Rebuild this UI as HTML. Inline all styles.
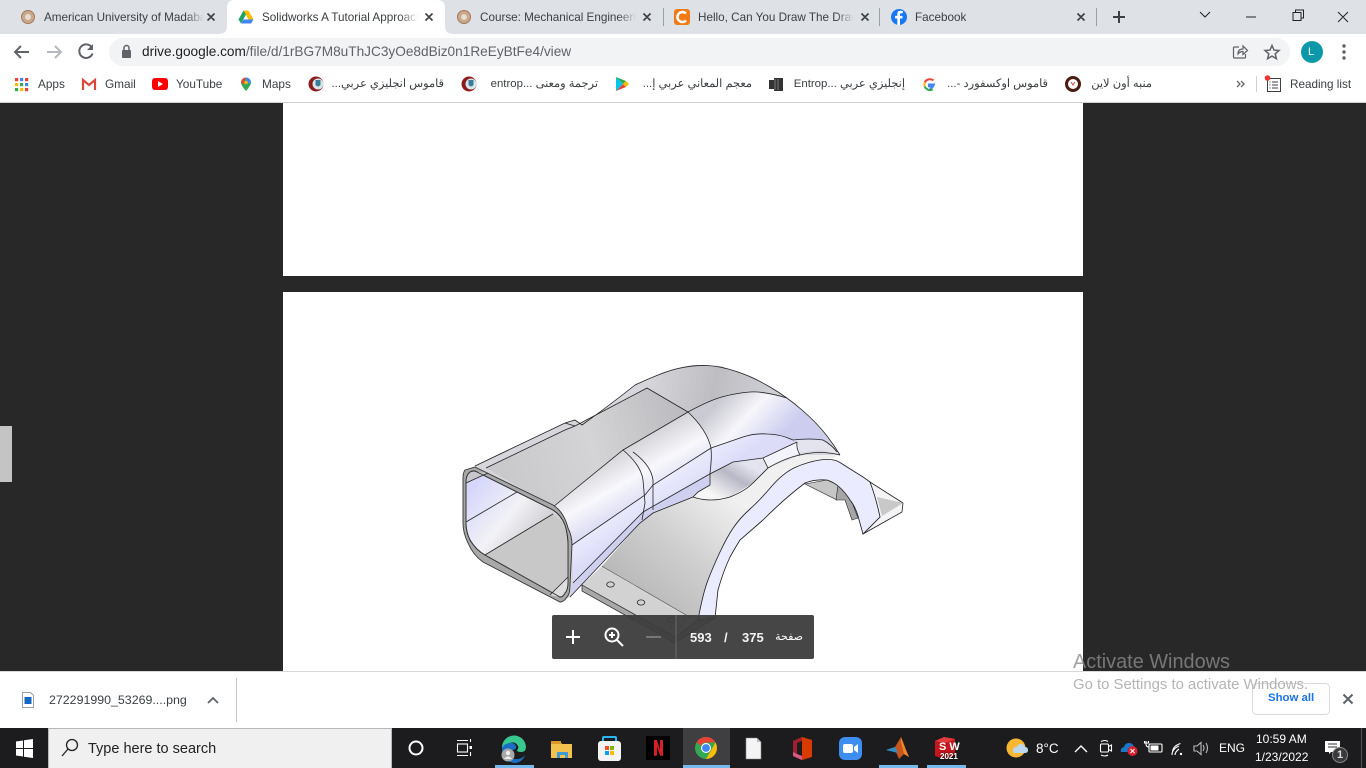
<!DOCTYPE html>
<html lang="en"><head><meta charset="utf-8"><title>Drive</title>
<style>
html,body{margin:0;padding:0;width:1366px;height:768px;overflow:hidden;background:#282828;font-family:"Liberation Sans","Noto Sans CJK SC",sans-serif}
.a{position:absolute;white-space:nowrap}
svg{position:absolute;overflow:visible}
.t{font-size:11.7px;color:#3c4043;top:10px;overflow:hidden;line-height:15px}
.b{font-size:11.8px;color:#3c4043;top:77px;line-height:15px}
.r{direction:rtl;text-align:right;font-size:11.4px}
.f{position:absolute;top:0;width:18px;height:34px;background:linear-gradient(to right,rgba(222,225,230,0),#dee1e6)}
.bar{position:absolute;top:765px;height:3px;background:#76b9ed}
.w{color:#f4f4f4;font-size:13px;font-weight:bold}
.s{stroke:#222;stroke-width:.8;fill:none}
</style></head><body>
<!-- tab strip -->
<div class="a" style="left:0;top:0;width:1366px;height:34px;background:#dee1e6"></div>
<div class="a" style="left:0;top:34px;width:1366px;height:68px;background:#fff"></div>
<div class="a" style="left:0;top:102px;width:1366px;height:1px;background:#d0d0d0"></div>
<svg style="left:0;top:0" width="1366" height="103">
<path d="M219,34 Q227,34 227,26 V8 Q227,0 235,0 H437 Q445,0 445,8 V26 Q445,34 453,34Z" fill="#fff"/>
<g fill="#c9a98c" stroke="#a5785c"><circle cx="28" cy="17" r="6.5"/><circle cx="464" cy="17" r="6.5"/></g>
<circle cx="28" cy="17" r="3" fill="#e8dcd0"/><circle cx="464" cy="17" r="3" fill="#e8dcd0"/>
<path d="M243.5,10.5h5l5,9h-5z" fill="#fbbc04"/><path d="M243.5,10.5l-5,9 2.500,4 5-9z" fill="#1fa463"/><path d="M241,23.500h10l2.500-4h-10z" fill="#4285f4"/>
<rect x="674" y="9" width="16" height="16" rx="3" fill="#f07b16"/><path d="M686,13.500a5,5 0 1 0 0,7" fill="none" stroke="#fff" stroke-width="2.500"/>
<circle cx="899" cy="17" r="8" fill="#1877f2"/><path d="M900,25v-6.500h2.300l.4-2.600h-2.700v-1.400q0-1.200 1.300-1.200h1.500v-2.300q-3.200-.7-4.500.3-1,.9-1,2.700v1.900h-2.200v2.600h2.200V25z" fill="#fff"/>
<g stroke="#3c4043" stroke-width="1.600" fill="none">
<path d="M207.500,13.500l7,7m0-7l-7,7M425.500,13.500l7,7m0-7l-7,7M643.500,13.500l7,7m0-7l-7,7M861.500,13.500l7,7m0-7l-7,7M1077.500,13.500l7,7m0-7l-7,7"/>
<path d="M1119,11v12M1113,17h12" stroke-width="2"/></g>
<g stroke="#9aa0a6" stroke-width="1"><path d="M663.500,8v18M879.500,8v18M1096.500,8v18"/></g>
<g stroke="#222" stroke-width="1" fill="none"><path d="M1200,12l5,5 5-5M1246,17h10M1293,12.500h8v8h-8zM1295.500,12.500v-2.500h8v8h-2.500M1338,12l10,10m0-10l-10,10"/></g>
<!-- omnibox -->
<rect x="109" y="38" width="1181" height="28" rx="14" fill="#f1f3f4"/>
<g fill="none" stroke="#5f6368" stroke-width="2"><path d="M29,52H15m6-6l-6,6 6,6"/><path d="M47,52h14m-6-6l6,6-6,6" stroke="#b5b8bc"/><path d="M91.500,47a6.800,6.800 0 1 0 1,6.500"/></g>
<path d="M93,44v6h-6z" fill="#5f6368"/>
<rect x="122" y="50" width="9" height="8" rx="1" fill="#5f6368"/><path d="M124,50v-2a2.500,2.500 0 0 1 5,0v2" fill="none" stroke="#5f6368" stroke-width="1.500"/>
<g fill="none" stroke="#5f6368" stroke-width="1.200"><path d="M1239,47h-4.500q-1,0-1,1v9q0,1 1,1h10q1,0 1-1v-3"/><path d="M1238,54q0-5 5-5v-3l4.500,4.500-4.500,4v-3q-3,0-5,2.500z"/><path d="M1272,45.500l2,4.600 5,.4-3.800,3.300 1.200,4.900-4.400-2.600-4.400,2.600 1.200-4.900-3.800-3.300 5-.4z" stroke-width="1.500"/></g>
<circle cx="1312" cy="52" r="11" fill="#0b98a8"/>
<g fill="#5f6368"><circle cx="1344" cy="46" r="1.700"/><circle cx="1344" cy="52" r="1.700"/><circle cx="1344" cy="58" r="1.700"/></g>
<!-- bookmarks icons -->
<g><rect x="15" y="78" width="3.200" height="3.200" fill="#ea4335"/><rect x="20" y="78" width="3.200" height="3.200" fill="#4285f4"/><rect x="25" y="78" width="3.200" height="3.200" fill="#ea4335"/><rect x="15" y="83" width="3.200" height="3.200" fill="#fbbc04"/><rect x="20" y="83" width="3.200" height="3.200" fill="#34a853"/><rect x="25" y="83" width="3.200" height="3.200" fill="#4285f4"/><rect x="15" y="88" width="3.200" height="3.200" fill="#34a853"/><rect x="20" y="88" width="3.200" height="3.200" fill="#fbbc04"/><rect x="25" y="88" width="3.200" height="3.200" fill="#ea4335"/></g>
<path d="M83,90V80l6,5 6-5v10" fill="none" stroke="#d9483b" stroke-width="2.200"/>
<rect x="152" y="78" width="16" height="12" rx="3" fill="#f00"/><path d="M158,81v6l5-3z" fill="#fff"/>
<path d="M246,91q-5-5.500-5-8.500a5,5 0 0 1 10,0q0,3-5,8.500z" fill="#34a853"/><path d="M241,82.500a5,5 0 0 1 5-5l-3,7z" fill="#ea4335"/><path d="M246,77.500a5,5 0 0 1 5,5l-4,2z" fill="#4285f4"/><circle cx="246" cy="82.500" r="1.800" fill="#fbbc04"/>
<g><circle cx="316" cy="84" r="7.500" fill="#8e1b1b"/><circle cx="318" cy="84" r="5.500" fill="#d8e6ea"/><path d="M315.500,80h5v5q-2.500,3-5,0z" fill="#3a7d9a"/><circle cx="469" cy="84" r="7.500" fill="#8e1b1b"/><circle cx="471" cy="84" r="5.500" fill="#d8e6ea"/><path d="M468.500,80h5v5q-2.500,3-5,0z" fill="#3a7d9a"/></g>
<path d="M616,77l7,7-7,7z" fill="#00c4e8"/><path d="M616,77l7,7 3-3z" fill="#34a853"/><path d="M616,91l7-7 3,3z" fill="#ea4335"/><path d="M626,81l3,3-3,3-3-3z" fill="#fbbc04"/>
<path d="M769,80h5v-2h9v13h-9v-2h-5z" fill="#333"/><path d="M775,79v11M778,79v11" stroke="#999" stroke-width=".7"/>
<path d="M935,84.500h-6v1.800h4q-.8,2.200-3.400,2.200" fill="none" stroke="#4285f4" stroke-width="2"/><path d="M933.500,80.300a6,6 0 0 0-8.800,2.200" fill="none" stroke="#ea4335" stroke-width="2"/><path d="M924.700,82.500a6,6 0 0 0 0,4" fill="none" stroke="#fbbc04" stroke-width="2"/><path d="M924.700,86.500a6,6 0 0 0 8,3" fill="none" stroke="#34a853" stroke-width="2"/>
<circle cx="1073" cy="84" r="6.500" fill="#fff" stroke="#4a1c12" stroke-width="3"/><path d="M1071,82l2,3 2-3" fill="none" stroke="#c44" stroke-width="1"/>
<path d="M1237,81l3,3-3,3M1241,81l3,3-3,3" fill="none" stroke="#5f6368" stroke-width="1.300"/>
<path d="M1256.500,76v16" stroke="#d0d0d0"/>
<g fill="none" stroke="#3c4043" stroke-width="1"><rect x="1267.500" y="78.500" width="13" height="13"/><path d="M1272,82h6M1272,85h6M1272,88h6M1269.500,82h1M1269.500,85h1M1269.500,88h1"/></g>
<circle cx="1267.500" cy="78" r="2.800" fill="#e33"/>
</svg>
<div class="a t" style="left:44px;width:160px">American University of Madaba</div><div class="f" style="left:186px"></div>
<div class="a t" style="left:262px;width:156px">Solidworks A Tutorial Approach</div><div class="a" style="left:400px;top:0;width:18px;height:34px;background:linear-gradient(to right,rgba(255,255,255,0),#fff)"></div>
<div class="a t" style="left:480px;width:156px">Course: Mechanical Engineering</div><div class="f" style="left:618px"></div>
<div class="a t" style="left:698px;width:156px">Hello, Can You Draw The Drawing</div><div class="f" style="left:836px"></div>
<div class="a t" style="left:915px">Facebook</div>
<div class="a" style="left:142px;top:44px;font-size:13.65px;line-height:16px;color:#5f6368"><span style="color:#202124">drive.google.com</span>/file/d/1rBG7M8uThJC3yOe8dBiz0n1ReEyBtFe4/view</div>
<div class="a" style="left:1308px;top:46px;font-size:11px;line-height:13px;color:#fff">L</div>
<div class="a b" style="left:38px">Apps</div>
<div class="a b" style="left:105px">Gmail</div>
<div class="a b" style="left:176px">YouTube</div>
<div class="a b" style="left:262px">Maps</div>
<div class="a b r" style="left:324px;width:120px" dir="rtl">قاموس انجليزي عربي...</div>
<div class="a b r" style="left:478px;width:120px" dir="rtl">ترجمة ومعنى ...entrop</div>
<div class="a b r" style="left:632px;width:120px" dir="rtl">معجم المعاني عربي إ...</div>
<div class="a b r" style="left:785px;width:120px" dir="rtl">إنجليزي عربي ...Entrop</div>
<div class="a b r" style="left:938px;width:110px" dir="rtl">قاموس اوكسفورد -...</div>
<div class="a b r" style="left:1082px;width:70px" dir="rtl">منبه أون لاين</div>
<div class="a b" style="left:1290px;font-size:11.7px">Reading list</div>
<!-- page -->
<div class="a" style="left:0;top:103px;width:1366px;height:568px;background:#282828"></div>
<div class="a" style="left:283px;top:103px;width:800px;height:173px;background:#fff"></div>
<div class="a" style="left:283px;top:292px;width:800px;height:380px;background:#fff"></div>
<div class="a" style="left:0;top:426px;width:12px;height:56px;background:#c4c4c4"></div>
<svg style="left:0;top:0" width="1366" height="768">
<defs>
<linearGradient id="gU" gradientUnits="userSpaceOnUse" x1="640" y1="610" x2="735" y2="500"><stop offset="0" stop-color="#b6b6b6"/><stop offset=".5" stop-color="#cfcfcf"/><stop offset="1" stop-color="#f0f0f0"/></linearGradient>
<linearGradient id="gT" gradientUnits="userSpaceOnUse" x1="500" y1="465" x2="680" y2="410"><stop offset="0" stop-color="#c9c9cb"/><stop offset=".5" stop-color="#d4d4d6"/><stop offset="1" stop-color="#bcbcc0"/></linearGradient>
<linearGradient id="gC" gradientUnits="userSpaceOnUse" x1="650" y1="370" x2="780" y2="395"><stop offset="0" stop-color="#d6d6da"/><stop offset=".5" stop-color="#bebec2"/><stop offset="1" stop-color="#d0d0d8"/></linearGradient>
<linearGradient id="gS" gradientUnits="userSpaceOnUse" x1="610" y1="452" x2="640" y2="505"><stop offset="0" stop-color="#d0d0d4"/><stop offset=".55" stop-color="#f8f8fc"/><stop offset="1" stop-color="#dcdcf4"/></linearGradient>
<linearGradient id="gB" gradientUnits="userSpaceOnUse" x1="725" y1="395" x2="775" y2="442"><stop offset="0" stop-color="#cacad2"/><stop offset=".45" stop-color="#f6f6fb"/><stop offset="1" stop-color="#cdcdf0"/></linearGradient>
<linearGradient id="gL" gradientUnits="userSpaceOnUse" x1="640" y1="480" x2="662" y2="512"><stop offset="0" stop-color="#f2f2fe"/><stop offset="1" stop-color="#dcdcf9"/></linearGradient>
<linearGradient id="gBl" gradientUnits="userSpaceOnUse" x1="722" y1="500" x2="745" y2="463"><stop offset="0" stop-color="#f6f6f6"/><stop offset=".6" stop-color="#b8b8c6"/><stop offset="1" stop-color="#e4e4f0"/></linearGradient>
<linearGradient id="gI" gradientUnits="userSpaceOnUse" x1="470" y1="490" x2="530" y2="540"><stop offset="0" stop-color="#d6d6fb"/><stop offset=".6" stop-color="#f2f2f6"/><stop offset="1" stop-color="#d2d2d6"/></linearGradient>
</defs>
<!-- far flange + inner arch -->
<path d="M870,482L903,503 902,512 863,534 880,517z" fill="#f4f4f6" stroke="#222" stroke-width=".8"/>
<path d="M877,497L903,503 882,516z" fill="#c8c8c8"/>
<path d="M805,484L837,500 838,485 827,480z" fill="#c6c6c6" stroke="#222" stroke-width=".6"/>
<path d="M838,485L850,497 858,518 852,520 845,500 836,500z" fill="#a6a6a6" stroke="#222" stroke-width=".6"/>
<!-- near flange -->
<path d="M582,585L602,566 690,617 675,637z" fill="#d2d2d2"/>
<path d="M582,585L675,637 675,643 582,591z" fill="#a8a8a8" stroke="#222" stroke-width=".7"/>
<path d="M675,637L698,620 715,618 675,643z" fill="#aaa" stroke="#222" stroke-width=".7"/>
<path d="M602,566L690,617" class="s"/>
<g class="s"><ellipse cx="610.500" cy="584.500" rx="3.800" ry="2.600"/><ellipse cx="641" cy="602.500" rx="3.800" ry="2.600"/><ellipse cx="671.500" cy="620" rx="3.800" ry="2.600"/></g>
<!-- underside surface -->
<path d="M602,566L640,523 653,513 693,497Q710,503 730,497 745,491 753,483L768,468Q785,458 800,455 820,450 840,455L833,458 820,460 807,462 795,467 783,473 771,487 750,509 733,527 720,552 708,580 698,620 690,617z" fill="url(#gU)"/>
<!-- arch face -->
<path d="M698,620Q703,593 708,580 Q713,567 720,552 Q727,537 733.500,527.500 Q740,518 750,509 Q760,500 771.500,486.500 Q783,473 795,467.500 Q807,462 820,460 Q833,458 840,462.500 Q847,467 855,472 Q865,478 870,482 Q876,498 880,517L863,534 858,516Q855,506 850,500 Q840,484 827,480 Q815,479 805,483 Q785,498 763,520L740,540Q735,548 730,557 Q723,572 718,590L715,618z" fill="#ebebff" stroke="#222" stroke-width=".85"/>
<!-- duct body base -->
<path d="M475,466L565,423 575,420 582,425 Q610,405 635,385 Q663,372 678,368.500 Q693,365 706.500,365.500 Q720,366 736.500,371.500 Q753,377 770,387 Q787,397 802,410 Q817,423 827,436 Q834,445 840,455L800,455 768,468 753,483 730,497 710,500 693,497 653,513 640,523 570,597 560,602 553,508z" fill="#d6d6dc"/>
<path d="M486,468L575,426 647,388 688,412 623,450 553,507z" fill="url(#gT)"/>
<path d="M647,388L688,412Q710,400 723.500,396.500 Q737,393 750,392 Q763,391 787,398 L770,387 753,377 736,371 720,366 706,365 693,365 678,368 663,372 635,385z" fill="url(#gC)"/>
<path d="M553,507L623,450 688,412Q707,430 711,448L653,485 645,495 572,545Q570,520 553,507z" fill="url(#gS)"/>
<path d="M688,412Q710,400 723.500,396.500 Q737,393 750,392 Q763,391 787,398 Q815,420 837,452 Q830,442 823,440L793,440Q780,434 767,434 Q755,433 743,437L711,448Q707,430 688,412z" fill="url(#gB)"/>
<path d="M572,545L645,495 653,485 711,448 743,437Q755,433 767,434 Q780,434 793,440L797,442 763,458 733,462 708,475 643,512 573,583z" fill="url(#gL)"/>
<path d="M797,442L793,440 823,440 837,452 840,455 820,450 800,453z" fill="#e4e4ee"/>
<path d="M763,458L797,442 800,453 768,468z" fill="#f3f3fb"/>
<path d="M570,597L573,583 643,512 708,475 710,485 698,492 693,497 653,513 640,523z" fill="#cfcff0"/>
<path d="M710,473L733,462 763,458 768,468 753,483 730,497 710,500 693,497 698,492 710,485z" fill="url(#gBl)"/>
<!-- outlines -->
<g class="s">
<path d="M475,466L565,423 575,420 582,425 Q610,405 635,385 Q663,372 678,368.500 Q693,365 706.500,365.500 Q720,366 736.500,371.500 Q753,377 770,387 Q787,397 802,410 Q817,423 827,436 Q834,445 840,455"/>
<path d="M486,468L565,430 575,426 647,388 688,412"/>
<path d="M565,423L575,426"/>
<path d="M553,507L623,450 688,412Q710,400 723.500,396.500 Q737,393 750,392 Q763,391 787,398"/>
<path d="M688,412Q707,430 711,448 Q712,458 710,473"/>
<path d="M572,545L645,495 653,485 711,448 743,437Q755,433 767,434 Q780,434 793,440 Q810,438 823,440 Q832,445 837,452"/>
<path d="M623,450Q641,465 643,480L645,503 642,520M633,452Q651,465 653,480V510"/>
<path d="M643,512L708,475 733,462 763,458 797,442"/>
<path d="M710,473V485L698,492 693,497Q710,503 730,497 Q745,491 753,483L768,468Q785,458 800,455 Q820,450 840,455"/>
<path d="M763,458L768,468M797,442Q796,448 800,455"/>
<path d="M570,597L640,523 653,513 693,497"/>
<path d="M573,583L643,512"/>
</g>
<!-- opening -->
<path d="M465,470L475,467 553,505Q564,512 568,528 Q572,536 572,545L570,585Q570,594 567,597 Q564,602 560,602L483,562Q473,555 468,543 Q463,533 463,523V478Q463,473 465,470z" fill="#a8a8a8" stroke="#333" stroke-width=".9"/>
<path d="M470,472Q474,470 477,472L553,510Q561,515 565,525 Q568,535 568,545V582Q568,590 565,593 Q563,597 560,597L485,555Q476,550 470,540 Q466,532 466,523V482Q466,475 470,472z" fill="url(#gI)" stroke="#333" stroke-width=".9"/>
<path d="M485,555L553,514 565,525 568,545V582Q568,590 565,593 Q563,597 560,597z" fill="#c8c8c8"/>
<path d="M467,483L488,473 477,472 470,472Q466,475 466,483z" fill="#c8c8cc"/>
<path d="M550,595L568,577V582Q568,590 565,593 Q563,597 560,597z" fill="#dedede"/>
<g class="s"><path d="M466,483L488,473M466,522L517,492M485,555L553,514M550,595L568,577"/></g>
<path d="M470,472Q474,470 477,472L553,510Q561,515 565,525 Q568,535 568,545V582Q568,590 565,593 Q563,597 560,597L485,555Q476,550 470,540 Q466,532 466,523V482Q466,475 470,472z" fill="none" stroke="#333" stroke-width=".9"/>
<!-- viewer toolbar -->
<rect x="552" y="615" width="262" height="44" rx="2" fill="#3c3c3c" fill-opacity=".95"/>
<path d="M676,615V659" stroke="#6c6c6c"/>
<g stroke="#fff" stroke-width="2" fill="none"><path d="M573,630v14M566,637h14"/><circle cx="612" cy="635" r="6.500"/><path d="M617,640l6,6M609,635h6M612,632v6"/></g>
<path d="M646,637h15" stroke="#777" stroke-width="2"/>
</svg>
<div class="a w" style="left:690px;top:630px;line-height:15px">593</div>
<div class="a w" style="left:724px;top:630px;line-height:15px">/</div>
<div class="a w" style="left:742px;top:630px;line-height:15px">375</div>
<div class="a" style="left:770px;top:630px;width:33px;text-align:right;color:#fff;font-size:11px;line-height:15px">صفحة</div>
<!-- download bar -->
<div class="a" style="left:0;top:671px;width:1366px;height:57px;background:#fff;border-top:1px solid #d8d8d8;box-sizing:border-box"></div>
<svg style="left:0;top:0" width="1366" height="768">
<path d="M22.500,692.500h8l3,3v12h-11z" fill="#fff" stroke="#9aa0a6"/><rect x="24.500" y="697" width="7" height="7" fill="#1467c4"/>
<path d="M208,703l5-5 5,5" fill="none" stroke="#5f6368" stroke-width="1.800"/>
<path d="M236.500,678V722" stroke="#c8c8c8"/>
<rect x="1252.500" y="683.500" width="77" height="31" rx="4" fill="#fff" fill-opacity=".6" stroke="#d8dadd"/>
<path d="M1343.500,694.500l9,9m0-9l-9,9" stroke="#5f6368" stroke-width="2"/>
</svg>
<div class="a" style="left:49px;top:693px;font-size:12.4px;line-height:15px;color:#3c4043">272291990_53269....png</div>
<div class="a" style="left:1268px;top:691px;font-size:11.4px;line-height:15px;color:#1a73e8;font-weight:bold">Show all</div>
<div class="a" style="left:1073px;top:651px;font-size:19.9px;line-height:22px;color:#8b8b8b;opacity:.8">Activate Windows</div>
<div class="a" style="left:1073px;top:677px;font-size:14.9px;line-height:16px;color:#b4b4b4">Go to Settings to activate Windows.</div>
<!-- taskbar -->
<div class="a" style="left:0;top:728px;width:1366px;height:40px;background:#1c1c1e"></div>
<div class="a" style="left:48px;top:728px;width:344px;height:40px;background:#f0f0f0;border:1px solid #b8b8b8;border-bottom:0;box-sizing:border-box"></div>
<div class="a" style="left:683px;top:728px;width:47px;height:40px;background:#3f3f41"></div>
<div class="bar" style="left:495px;width:39px"></div><div class="bar" style="left:683px;width:47px"></div><div class="bar" style="left:879px;width:39px"></div><div class="bar" style="left:927px;width:39px"></div>
<svg style="left:0;top:0" width="1366" height="768">
<path d="M16,741.500l7-1v7.500h-7zM24,740.300l9-1.300v9h-9zM16,749h7v7.500l-7-1zM24,749h9v9l-9-1.300z" fill="#fff"/>
<circle cx="72" cy="745" r="5.500" fill="none" stroke="#222" stroke-width="1.300"/><path d="M68,749l-6,7" stroke="#222" stroke-width="1.300"/>
<circle cx="416" cy="748" r="6.500" fill="none" stroke="#fff" stroke-width="2"/>
<g fill="none" stroke="#fff" stroke-width="1.100"><rect x="457.500" y="744" width="10" height="8"/><path d="M457,740.500h11M457,755.500h11M470.500,739v3M470.500,752v4"/></g><rect x="469.500" y="746" width="2.500" height="3" fill="#fff"/>
<!-- edge -->
<path d="M502,748a12,12 0 0 1 24-1q0,5-5,5-4,0-4-2 2-1 1-4-3-5-8-3-6,2-8,5z" fill="#38c88e"/><path d="M502,748q2-4 7-5 5-1 7,3 1,3-3,4-3,1-3,4 0,5 5,5 6,1 10-4-3,8-11,8-12-2-12-15z" fill="#1a6fc4"/><circle cx="508" cy="755" r="6.500" fill="#a8a8a8"/><circle cx="508" cy="753" r="2.200" fill="#eee"/><path d="M504,759q4-5 8,0" fill="#eee"/>
<!-- explorer -->
<path d="M551,741h9l2,3h10v14h-21z" fill="#f2c14e"/><path d="M551,741h10v3h-10z" fill="#d8982c"/><path d="M557,758v-6h11v6h-3v-3h-5v3z" fill="#3f9bd8"/>
<!-- store -->
<rect x="598" y="741" width="23" height="20" rx="3" fill="#f4f4f4"/><path d="M603,741v-3q0-1 1-1h11q1,0 1,1v3" fill="none" stroke="#29b6f6" stroke-width="2"/><rect x="605" y="746" width="4" height="4" fill="#f25022"/><rect x="610" y="746" width="4" height="4" fill="#7fba00"/><rect x="605" y="751" width="4" height="4" fill="#00a4ef"/><rect x="610" y="751" width="4" height="4" fill="#ffb900"/>
<!-- netflix -->
<rect x="646" y="736" width="24" height="24" fill="#000"/><path d="M654,740h3l3,10v-10h3v16l-3-.5-3-9v9l-3,.5z" fill="#d81f26"/>
<!-- chrome -->
<circle cx="706" cy="748" r="11" fill="#34a853"/><path d="M706,737a11,11 0 0 1 9.500,5.500H706a5.500,5.500 0 0 0-5,3L696.500,742.500A11,11 0 0 1 706,737z" fill="#ea4335"/><path d="M715.500,742.500a11,11 0 0 1-9.500,16.500l5-8.500z" fill="#fbbc04"/><circle cx="706" cy="748" r="5" fill="#fff"/><circle cx="706" cy="748" r="3.900" fill="#4285f4"/>
<!-- file -->
<path d="M746,738h11l4,4v17h-15z" fill="#f4f4f4" stroke="#888" stroke-width=".6"/><path d="M757,738v4h4z" fill="#bbb"/>
<!-- office -->
<path d="M793,741l9-4 10,3v17l-10,3-9-4z" fill="#d83b01"/><path d="M793,741l9-4v23l-9-4z" fill="#a11f2e"/><path d="M797,743l5-2v15l-5-2z" fill="#1c1c1e"/><path d="M793,752l4,2 5,2v4l-9-4z" fill="#d65a85"/>
<!-- zoom -->
<rect x="839" y="737" width="23" height="23" rx="6" fill="#3d8ef0"/><rect x="843" y="744" width="10" height="9" rx="2" fill="#fff"/><path d="M854,747l4-3v9l-4-3z" fill="#fff"/>
<!-- matlab -->
<path d="M886,750l9-3 6-10 5,13 3,7-5-3-5,5-3-7z" fill="#c9541c"/><path d="M901,737l5,13 3,7-5-3-3-12z" fill="#ec8a2a"/><path d="M886,750l9-3 3,6z" fill="#2f8fc8"/>
<!-- SW -->
<path d="M935,741l9-4 11,2v16l-10,4-10-3z" fill="#c5161d"/><path d="M935,741l9-4 11,2-10,4z" fill="#e23a3f"/>
<!-- weather -->
<circle cx="1016" cy="748" r="9.500" fill="#f7b733"/><path d="M1014,753h11q3,0 3-3 0-3-3-3-1-3-4-3-3.500,0-4,3-4,0-4,3 0,3 1,3z" fill="#bcd8ee"/>
<!-- tray -->
<g fill="none" stroke="#fff" stroke-width="1.100">
<path d="M1075,752l6-6 6,6" stroke-width="1.400"/>
<rect x="1100.500" y="744" width="8" height="8" rx="1"/><path d="M1108.500,746.500l3-1.500v6l-3-1.500M1101,741.500q4-2 7,0M1101,755q4,2 7,0"/>
<rect x="1149" y="744" width="13" height="8" rx="1"/><path d="M1146,741v3q0,3 3,3M1144.500,741v2h4v-2"/>
<path d="M1172,755q0-6 7-9M1175,755q0-3 4-6M1172.500,751.500q1-6 8-8" />
<path d="M1194,746h3l4-3.500v12l-4-3.500h-3zM1203,745q2,3 0,6M1206,743q3,5 0,10" stroke-opacity=".7"/>
</g>
<rect x="1150.500" y="745.500" width="8" height="5" fill="#fff"/><circle cx="1181" cy="754" r="1.200" fill="#fff"/>
<path d="M1121,752q-1-4 3-5 1-4 5-4 4,0 5,4 3,1 2,5z" fill="#1a78c8"/><circle cx="1132.500" cy="751" r="5" fill="#d8232f"/><path d="M1130.500,749l4,4m0-4l-4,4" stroke="#fff" stroke-width="1"/>
<path d="M1325,741h15v11h-9l-2,2v-2h-4z" fill="#fff"/><path d="M1328,744h9M1328,747h9" stroke="#333"/>
<circle cx="1340" cy="755" r="7.500" fill="#3a3a3c" stroke="#888"/>
<path d="M1361.500,728V768" stroke="#555"/>
</svg>
<div class="a" style="left:88px;top:741px;font-size:14.500px;line-height:17px;color:#222">Type here to search</div>
<div class="a" style="left:940px;top:752px;font-size:8px;font-weight:bold;line-height:10px;color:#fff;text-shadow:0 0 2px #000">2021</div>
<div class="a" style="left:939px;top:741px;font-size:11px;font-weight:bold;line-height:12px;color:#fff">S W</div>
<div class="a" style="left:1036px;top:741px;font-size:13.500px;line-height:16px;color:#fff">8°C</div>
<div class="a" style="left:1219px;top:741px;font-size:12px;line-height:14px;color:#fff">ENG</div>
<div class="a" style="left:1256px;top:732px;font-size:12px;line-height:14px;color:#fff">10:59 AM</div>
<div class="a" style="left:1255px;top:750px;font-size:12px;line-height:14px;color:#fff">1/23/2022</div>
<div class="a" style="left:1337px;top:749px;font-size:11px;font-weight:bold;line-height:12px;color:#ddd">1</div>
</body></html>
